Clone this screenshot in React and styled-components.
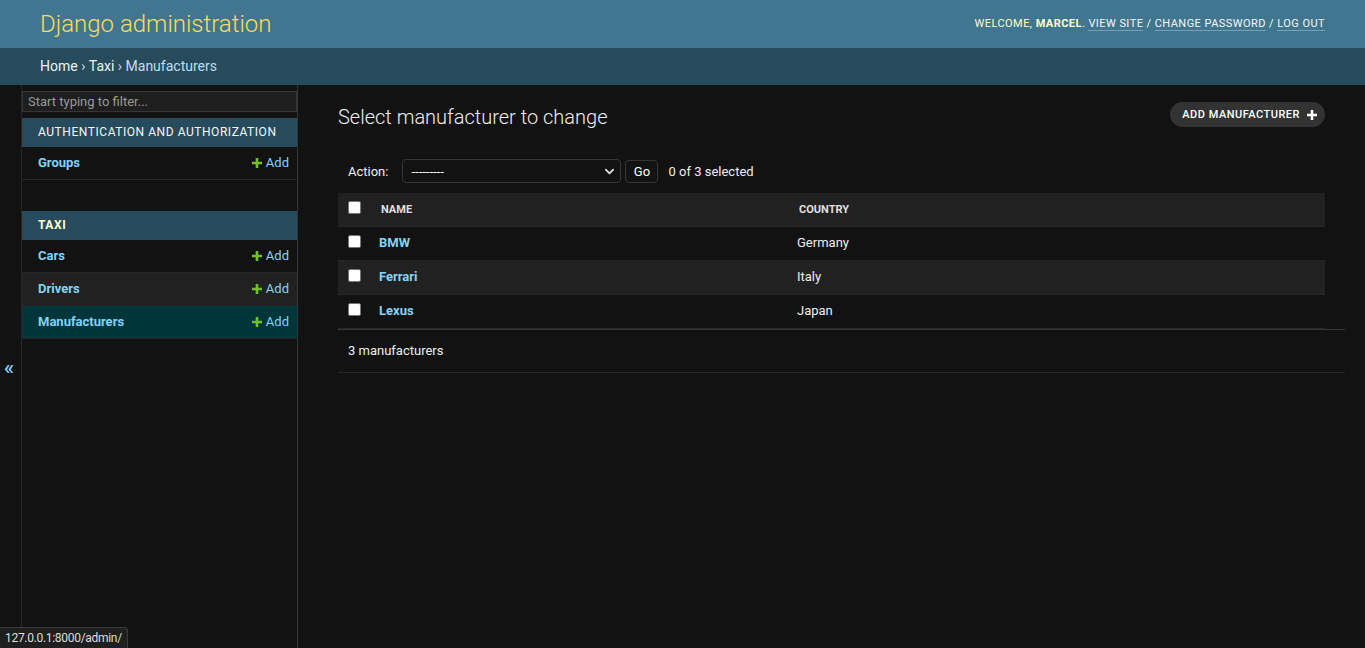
import React from 'react'
import styled, { createGlobalStyle } from 'styled-components'

const GlobalStyle = createGlobalStyle`
  html, body {
    margin: 0;
    padding: 0;
    background: #121212;
    color: #eeeeee;
    font-family: Roboto, "Liberation Sans", Arial, sans-serif;
    font-size: 14px;
  }
  * { box-sizing: border-box; }
  a { text-decoration: none; }
`

const PlusIcon = ({ color = '#70bf2b', size = 10 }) => (
  <svg width={size} height={size} viewBox="0 0 10 10">
    <path d="M3.7 0h2.6v3.7H10v2.6H6.3V10H3.7V6.3H0V3.7h3.7z" fill={color} />
  </svg>
)

const Chevron = () => (
  <svg width="11" height="11" viewBox="0 0 12 12">
    <path d="M2 4l4 4 4-4" fill="none" stroke="#e0e0e0" strokeWidth="2" strokeLinecap="round" strokeLinejoin="round" />
  </svg>
)

function App() {
  const apps = [
    { name: 'Authentication and Authorization', current: false, models: ['Groups'] },
    { name: 'Taxi', current: true, models: ['Cars', 'Drivers', 'Manufacturers'] },
  ]
  const rows = [
    { name: 'BMW', country: 'Germany' },
    { name: 'Ferrari', country: 'Italy' },
    { name: 'Lexus', country: 'Japan' },
  ]

  return (
    <>
      <GlobalStyle />
      <Header>
        <Branding>Django administration</Branding>
        <UserTools>
          WELCOME, <strong>MARCEL</strong>. <ToolLink href="#">VIEW SITE</ToolLink> /{' '}
          <ToolLink href="#">CHANGE PASSWORD</ToolLink> / <ToolLink href="#">LOG OUT</ToolLink>
        </UserTools>
      </Header>

      <Breadcrumbs>
        <a href="#">Home</a> › <a href="#">Taxi</a> › Manufacturers
      </Breadcrumbs>

      <Main>
        <ToggleColumn>
          <ToggleButton>«</ToggleButton>
        </ToggleColumn>

        <Sidebar>
          <FilterInput placeholder="Start typing to filter..." />
          {apps.map((app) => (
            <Module key={app.name}>
              <Caption $current={app.current}>{app.name}</Caption>
              {app.models.map((m, i) => (
                <NavRow key={m} $alt={i % 2 === 1} $selected={m === 'Manufacturers'}>
                  <ModelLink href="#">{m}</ModelLink>
                  <AddLink href="#">
                    <PlusIcon />
                    Add
                  </AddLink>
                </NavRow>
              ))}
            </Module>
          ))}
        </Sidebar>

        <Content>
          <TitleRow>
            <Title>Select manufacturer to change</Title>
            <ObjectTool href="#">
              ADD MANUFACTURER
              <PlusIcon color="#ffffff" size={10} />
            </ObjectTool>
          </TitleRow>

          <Actions>
            <label>Action:</label>
            <SelectBox>
              <span>---------</span>
              <Chevron />
            </SelectBox>
            <GoButton>Go</GoButton>
            <Counter>0 of 3 selected</Counter>
          </Actions>

          <Table>
            <thead>
              <tr>
                <CheckCell as="th" $head><Check /></CheckCell>
                <HeadCell style={{ width: 418 }}>Name</HeadCell>
                <HeadCell>Country</HeadCell>
              </tr>
            </thead>
            <tbody>
              {rows.map((r, i) => (
                <BodyRow key={r.name} $alt={i % 2 === 1}>
                  <CheckCell><Check /></CheckCell>
                  <Cell><RowLink href="#">{r.name}</RowLink></Cell>
                  <Cell>{r.country}</Cell>
                </BodyRow>
              ))}
            </tbody>
          </Table>

          <Paginator>3 manufacturers</Paginator>
        </Content>
      </Main>

      <StatusBar>127.0.0.1:8000/admin/</StatusBar>
    </>
  )
}

export default App

const Header = styled.header`
  height: 48px;
  padding: 0 40px;
  background: #417690;
  display: flex;
  align-items: center;
  justify-content: space-between;
`

const Branding = styled.h1`
  margin: 0;
  font-size: 24px;
  font-weight: 300;
  color: #f5dd5d;
`

const UserTools = styled.div`
  font-size: 11px;
  letter-spacing: 0.45px;
  color: #ffffcc;
  margin-top: -2px;

  strong {
    font-weight: 700;
  }
`

const ToolLink = styled.a`
  color: #f7f7f7;
  border-bottom: 1px solid rgba(255, 255, 255, 0.3);
`

const Breadcrumbs = styled.div`
  height: 37px;
  padding: 0 40px 2px;
  background: #264b5d;
  color: #c4dce8;
  font-size: 14px;
  display: flex;
  align-items: center;
  white-space: pre;

  a {
    color: #f0f0f0;
  }
`

const Main = styled.div`
  display: flex;
  min-height: calc(100vh - 85px);
`

const ToggleColumn = styled.div`
  width: 22px;
  flex-shrink: 0;
  border-right: 1px solid #272727;
  display: flex;
  align-items: center;
  justify-content: center;
`

const ToggleButton = styled.button`
  background: none;
  border: 0;
  padding: 0;
  margin: 0 0 0 -3px;
  color: #81d4fa;
  font-family: Roboto, sans-serif;
  font-size: 21px;
  font-weight: 500;
  cursor: pointer;
`

const Sidebar = styled.nav`
  width: 276px;
  flex-shrink: 0;
  border-right: 1px solid #353535;
`

const FilterInput = styled.input`
  display: block;
  width: 100%;
  height: 21px;
  margin: 6px 0;
  padding: 2px 5px;
  background: #1e1e1e;
  border: 1px solid #353535;
  color: #eee;
  font-family: Roboto, sans-serif;
  font-size: 13px;

  &::placeholder {
    color: #9a9a9a;
  }
`

const Module = styled.div`
  margin-bottom: 31px;
`

const Caption = styled.div`
  height: 29px;
  padding: 7px 16px 8px;
  background: #264b5d;
  font-size: 12px;
  line-height: 14px;
  letter-spacing: 0.55px;
  text-transform: uppercase;
  color: ${(p) => (p.$current ? '#ffffcc' : '#f7f7f7')};
  font-weight: ${(p) => (p.$current ? 700 : 400)};
`

const NavRow = styled.div`
  height: 33px;
  padding: 0 8px 1px 16px;
  border-bottom: 1px solid #272727;
  display: flex;
  align-items: center;
  justify-content: space-between;
  background: ${(p) => (p.$selected ? '#00363a' : p.$alt ? '#212121' : 'transparent')};
`

const ModelLink = styled.a`
  color: #81d4fa;
  font-size: 13px;
  font-weight: 700;
`

const AddLink = styled.a`
  color: #81d4fa;
  font-size: 13px;
  display: flex;
  align-items: center;
  gap: 4px;
`

const Content = styled.main`
  flex: 1;
  padding: 20px 40px;
`

const TitleRow = styled.div`
  display: flex;
  align-items: center;
  justify-content: space-between;
  height: 24px;
`

const Title = styled.h1`
  margin: 0;
  font-size: 20px;
  font-weight: 300;
  color: #eeeeee;
`

const ObjectTool = styled.a`
  margin-top: -5px;
  height: 25px;
  padding: 0 8px 0 12px;
  border-radius: 15px;
  background: #333333;
  color: #ffffff;
  font-size: 11px;
  font-weight: 500;
  letter-spacing: 0.5px;
  display: flex;
  align-items: center;
  gap: 7px;
`

const Actions = styled.div`
  margin: 30px 0 10px;
  padding: 0 10px;
  height: 24px;
  display: flex;
  align-items: center;
  font-size: 13px;
  color: #eeeeee;

  label {
    margin-right: 14px;
  }
`

const SelectBox = styled.div`
  width: 219px;
  height: 24px;
  padding: 0 5px 0 8px;
  border: 1px solid #353535;
  border-radius: 4px;
  background: #121212;
  color: #ffffff;
  display: flex;
  align-items: center;
  justify-content: space-between;
  font-size: 13px;
`

const GoButton = styled.button`
  margin-left: 4px;
  width: 33px;
  height: 23px;
  padding: 0;
  border: 1px solid #353535;
  border-radius: 4px;
  background: #121212;
  color: #ffffff;
  font-family: Roboto, sans-serif;
  font-size: 13px;
`

const Counter = styled.span`
  margin-left: 10px;
`

const Table = styled.table`
  width: 100%;
  border-collapse: collapse;
  font-size: 13px;
`

const HeadCell = styled.th`
  height: 33px;
  padding: 0 10px;
  background: #212121;
  border-bottom: 1px solid #272727;
  text-align: left;
  font-size: 11px;
  font-weight: 700;
  text-transform: uppercase;
  color: #e0e0e0;
`

const CheckCell = styled.td`
  width: 33px;
  height: ${(p) => (p.$head ? '33px' : '34px')};
  padding: 0 10px;
  background: ${(p) => (p.$head ? '#212121' : 'transparent')};
  border-bottom: 1px solid #272727;
  vertical-align: middle;
`

const Check = styled.span`
  display: block;
  width: 13px;
  height: 13px;
  margin-top: -4px;
  background: #ffffff;
  border: 1px solid #767676;
  border-radius: 2px;
`

const BodyRow = styled.tr`
  background: ${(p) => (p.$alt ? '#212121' : 'transparent')};
`

const Cell = styled.td`
  height: 34px;
  padding: 0 8px 1px;
  border-bottom: 1px solid #272727;
  color: #eeeeee;
  vertical-align: middle;
`

const RowLink = styled.a`
  color: #81d4fa;
  font-weight: 700;
`

const Paginator = styled.div`
  margin-right: -20px;
  padding: 0 10px;
  height: 44px;
  border-top: 1px solid #353535;
  border-bottom: 1px solid #272727;
  display: flex;
  align-items: center;
  font-size: 13px;
  color: #eeeeee;
`

const StatusBar = styled.div`
  position: fixed;
  left: 0;
  bottom: 0;
  height: 21px;
  padding: 0 5px;
  background: #1f1f1f;
  border: 1px solid #3a3a3a;
  border-left: 0;
  border-bottom: 0;
  border-top-right-radius: 4px;
  color: #dddddd;
  font-size: 12px;
  letter-spacing: -0.3px;
  display: flex;
  align-items: center;
`
